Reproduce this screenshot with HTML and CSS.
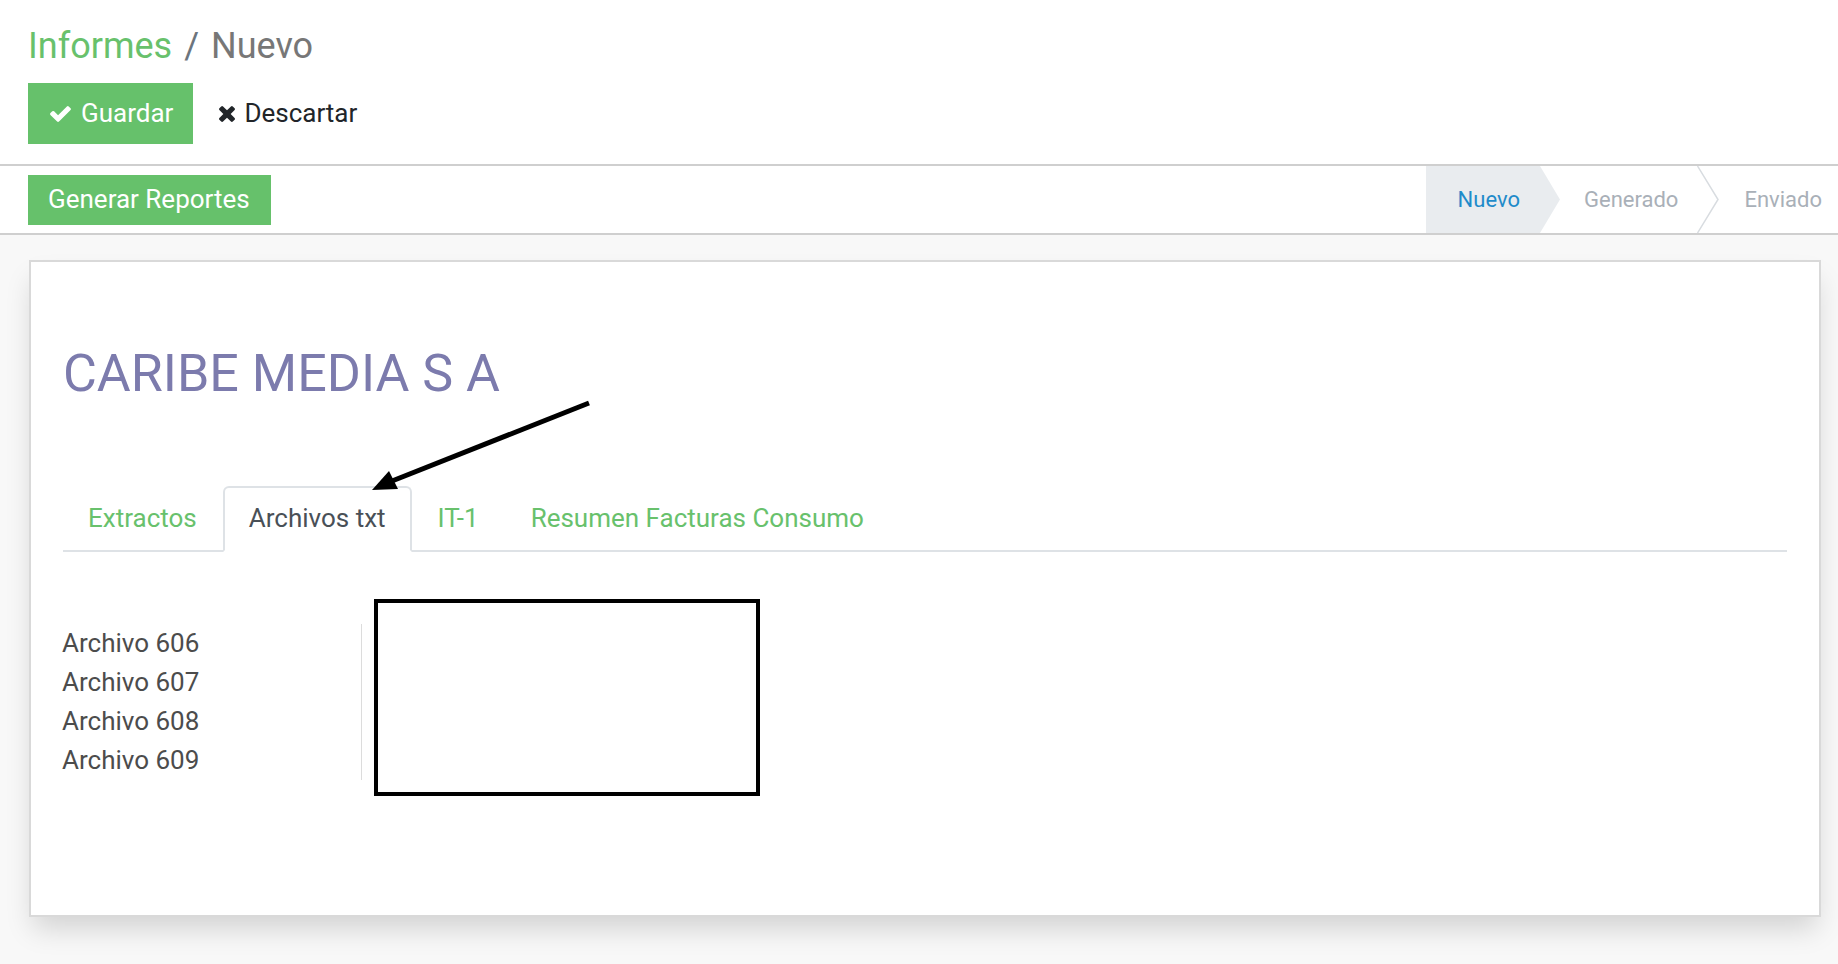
FILE: index.html
```html
<!DOCTYPE html>
<html lang="es">
<head>
<meta charset="utf-8">
<title>Informes / Nuevo</title>
<link rel="stylesheet" href="styles.css">
</head>
<body>
<header class="cp">
  <div class="cp-top">
    <h2 class="breadcrumb"><span class="bc-link">Informes</span><span class="bc-sep">/</span><span class="bc-cur">Nuevo</span></h2>
    <div class="cp-buttons">
      <button class="btn btn-primary btn-save"><svg class="ico-check" viewBox="121 334 1550 1188"><path fill="currentColor" d="M1671 566q0 40-28 68l-724 724-136 136q-28 28-68 28t-68-28l-136-136-362-362q-28-28-28-68t28-68l136-136q28-28 68-28t68 28l294 295 656-657q28-28 68-28t68 28l136 136q28 28 28 68z"/></svg>Guardar</button>
      <button class="btn btn-discard"><svg class="ico-times" viewBox="302 366 1188 1188"><path fill="currentColor" d="M1490 1322q0 40-28 68l-136 136q-28 28-68 28t-68-28l-294-294-294 294q-28 28-68 28t-68-28l-136-136q-28-28-28-68t28-68l294-294-294-294q-28-28-28-68t28-68l136-136q28-28 68-28t68 28l294 294 294-294q28-28 68-28t68 28l136 136q28 28 28 68t-28 68l-294 294 294 294q28 28 28 68z"/></svg>Descartar</button>
    </div>
  </div>
  <div class="cp-bar">
    <button class="btn btn-primary btn-gen">Generar Reportes</button>
    <div class="statusbar">
      <span class="status status-current">Nuevo</span>
      <span class="status status-mid">Generado<svg class="chev" viewBox="0 0 22 67" preserveAspectRatio="none"><polyline points="0.5,0 21,33.5 0.5,67" fill="none" stroke="#d8dce0" stroke-width="1.5"/></svg></span>
      <span class="status status-last">Enviado</span>
    </div>
  </div>
</header>
<main class="content">
  <div class="sheet">
    <h1 class="title">CARIBE MEDIA S A</h1>
    <ul class="tabs">
      <li class="tab">Extractos</li>
      <li class="tab tab-active">Archivos txt</li>
      <li class="tab">IT-1</li>
      <li class="tab">Resumen Facturas Consumo</li>
    </ul>
    <div class="group">
      <div class="labels">
        <div class="label">Archivo 606</div>
        <div class="label">Archivo 607</div>
        <div class="label">Archivo 608</div>
        <div class="label">Archivo 609</div>
      </div>
      <div class="field"><div class="redact"></div></div>
    </div>
    <svg class="arrow" viewBox="0 0 240 110">
      <line x1="229" y1="13" x2="32" y2="91" stroke="#000" stroke-width="5"/>
      <polygon points="12,100 29,81 38,99" fill="#000"/>
    </svg>
  </div>
</main>
</body>
</html>
```

FILE: styles.css
```css
html, body {
  margin: 0;
  height: 100%;
  overflow: hidden;
}
body {
  font-family: Roboto, "Liberation Sans", sans-serif;
  background: #f8f8f8;
}

.cp {
  background: #fff;
}
.cp-top {
  padding: 19px 0 20px 28px;
}
.breadcrumb {
  margin: 0;
  font-size: 36px;
  line-height: 54px;
  font-weight: 400;
}
.bc-link {
  color: #68c16c;
}
.bc-sep {
  color: #6c757d;
  margin: 0 12px 0 12px;
}
.bc-cur {
  color: #777;
}

.cp-buttons {
  margin-top: 10px;
  display: flex;
  align-items: center;
}
.btn {
  font-family: inherit;
  font-size: 26px;
  line-height: 39px;
  border: none;
  background: none;
  cursor: pointer;
  display: inline-flex;
  align-items: center;
  margin: 0;
}
.btn-primary {
  background: #66c16b;
  color: #fff;
}
.btn-save {
  padding: 11px 20px 11px 22px;
}
.ico-check {
  width: 21px;
  height: 16px;
  margin-right: 10px;
}
.btn-discard {
  margin-left: 26px;
  padding: 0;
  color: #212529;
}
.ico-times {
  width: 16px;
  height: 16px;
  margin-right: 9px;
}

.cp-bar {
  border-top: 2px solid #cfcfcf;
  border-bottom: 2px solid #cfcfcf;
  height: 67px;
  display: flex;
  align-items: center;
  justify-content: space-between;
  padding-left: 28px;
}
.btn-gen {
  padding: 5px 21px 6px 20px;
}
.statusbar {
  display: flex;
  align-self: stretch;
  font-size: 22px;
}
.status {
  position: relative;
  display: flex;
  align-items: center;
  color: #a9b0b8;
}
.status-current {
  background: #e9ecef;
  color: #1f8bca;
  padding: 0 20px 0 32px;
  z-index: 1;
}
.status-current::after {
  content: "";
  position: absolute;
  left: 100%;
  top: 0;
  bottom: 0;
  width: 20px;
  background: #e9ecef;
  clip-path: polygon(0 0, 100% 50%, 0 100%);
}
.status-mid {
  padding: 0 19px 0 44px;
}
.status-last {
  padding: 0 16px 0 47px;
}
.chev {
  position: absolute;
  left: 100%;
  top: 0;
  width: 22px;
  height: 67px;
}

.content {
  padding: 25px 17px 0 29px;
}
.sheet {
  position: relative;
  background: #fff;
  border: 2px solid #d9d9d9;
  min-height: 657px;
  box-sizing: border-box;
  padding: 81px 32px 0;
  box-shadow: 0 16px 26px -4px rgba(0, 0, 0, 0.15);
}
.title {
  margin: 0;
  font-size: 52px;
  line-height: 62px;
  font-weight: 400;
  color: #7c7bad;
}
.tabs {
  margin: 81px 0 0;
  padding: 0;
  list-style: none;
  display: flex;
  border-bottom: 2px solid #dee2e6;
}
.tab {
  padding: 11px 24px 12px;
  border: 2px solid transparent;
  border-radius: 6px 6px 0 0;
  margin: 0 0 -2px 0;
  font-size: 26px;
  line-height: 39px;
  color: #68c16c;
}
.tabs .tab:first-child {
  margin-left: -1px;
}
.tab-active {
  border-color: #dee2e6 #dee2e6 #fff;
  background: #fff;
  color: #495057;
}

.group {
  display: flex;
  align-items: flex-start;
  margin-top: 72px;
}
.labels {
  width: 299px;
  margin-left: -1px;
  border-right: 1px solid #dcdcdc;
  font-size: 26px;
  line-height: 39px;
  color: #4c4c4c;
}
.field {
  padding-left: 12px;
}
.redact {
  width: 386px;
  height: 197px;
  box-sizing: border-box;
  border: 4px solid #000;
  margin-top: -25px;
}
.arrow {
  position: absolute;
  left: 329px;
  top: 128px;
  width: 240px;
  height: 110px;
}
```
